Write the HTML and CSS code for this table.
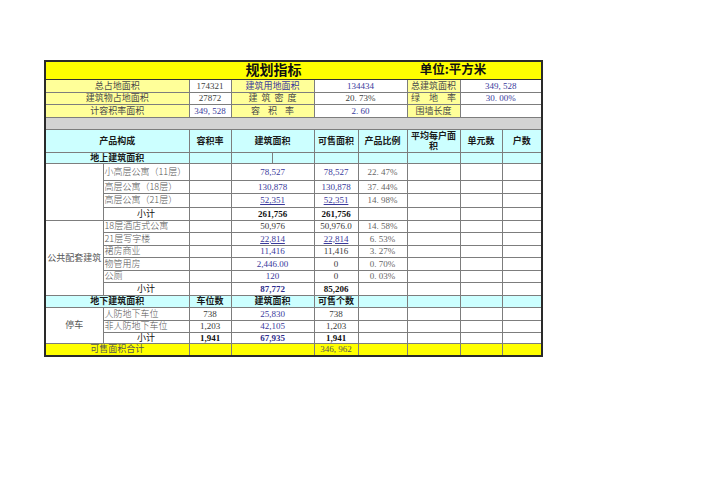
FILE: index.html
```html
<!DOCTYPE html>
<html lang="zh">
<head>
<meta charset="utf-8">
<title>规划指标</title>
<link rel="stylesheet" href="styles.css">
</head>
<body>
<div class="page">
<table class="sheet">
  <colgroup>
    <col class="c1"><col class="c2"><col class="c3"><col class="c4"><col class="c5"><col class="c6"><col class="c7"><col class="c8"><col class="c9">
  </colgroup>
  <tr class="r-title">
    <td colspan="2" class="t-blank"></td>
    <td colspan="3" class="t-main">规划指标</td>
    <td colspan="4" class="t-unit">单位:平方米</td>
  </tr>
  <tr class="r13">
    <td colspan="2" class="lab">总占地面积</td>
    <td class="val">174321</td>
    <td class="lab blue">建筑用地面积</td>
    <td colspan="2" class="val blue">134434</td>
    <td class="lab">总建筑面积</td>
    <td colspan="2" class="val blue">349, 528</td>
  </tr>
  <tr class="r12">
    <td colspan="2" class="lab">建筑物占地面积</td>
    <td class="val">27872</td>
    <td class="lab sp4">建筑密度</td>
    <td colspan="2" class="val">20. 73%</td>
    <td class="lab">绿　地　率</td>
    <td colspan="2" class="val blue">30. 00%</td>
  </tr>
  <tr class="r13">
    <td colspan="2" class="lab">计容积率面积</td>
    <td class="val blue">349, 528</td>
    <td class="lab sp8">容积率</td>
    <td colspan="2" class="val blue">2. 60</td>
    <td class="lab">围墙长度</td>
    <td colspan="2" class="val"></td>
  </tr>
  <tr class="r12">
    <td colspan="9" class="hatch"></td>
  </tr>
  <tr class="r-head">
    <th colspan="2">产品构成</th>
    <th>容积率</th>
    <th>建筑面积</th>
    <th>可售面积</th>
    <th>产品比例</th>
    <th class="wrap">平均每户面积</th>
    <th>单元数</th>
    <th>户数</th>
  </tr>
  <tr class="r11 cyan">
    <th colspan="2">地上建筑面积</th>
    <td></td><td class="split"></td><td></td><td></td><td></td><td></td><td></td>
  </tr>
  <tr class="r17">
    <td rowspan="4" class="grp"></td>
    <td class="name">小高层公寓（11层）</td>
    <td></td>
    <td class="num blue">78,527</td>
    <td class="num blue">78,527</td>
    <td class="pct">22. 47%</td>
    <td></td><td></td><td></td>
  </tr>
  <tr class="r13">
    <td class="name">高层公寓（18层）</td>
    <td></td>
    <td class="num blue">130,878</td>
    <td class="num blue">130,878</td>
    <td class="pct">37. 44%</td>
    <td></td><td></td><td></td>
  </tr>
  <tr class="r14">
    <td class="name">高层公寓（21层）</td>
    <td></td>
    <td class="num blue"><u>52,351</u></td>
    <td class="num blue"><u>52,351</u></td>
    <td class="pct">14. 98%</td>
    <td></td><td></td><td></td>
  </tr>
  <tr class="r13">
    <td class="sub">小计</td>
    <td></td>
    <td class="num b">261,756</td>
    <td class="num b">261,756</td>
    <td></td><td></td><td></td><td></td>
  </tr>
  <tr class="r12">
    <td rowspan="6" class="grp">公共配套建筑</td>
    <td class="name">18层酒店式公寓</td>
    <td></td>
    <td class="num">50,976</td>
    <td class="num">50,976.0</td>
    <td class="pct">14. 58%</td>
    <td></td><td></td><td></td>
  </tr>
  <tr class="r13">
    <td class="name">21层写字楼</td>
    <td></td>
    <td class="num blue"><u>22,814</u></td>
    <td class="num blue"><u>22,814</u></td>
    <td class="pct">6. 53%</td>
    <td></td><td></td><td></td>
  </tr>
  <tr class="r12">
    <td class="name">裙房商业</td>
    <td></td>
    <td class="num blue">11,416</td>
    <td class="num">11,416</td>
    <td class="pct">3. 27%</td>
    <td></td><td></td><td></td>
  </tr>
  <tr class="r13">
    <td class="name">物管用房</td>
    <td></td>
    <td class="num blue">2,446.00</td>
    <td class="num">0</td>
    <td class="pct">0. 70%</td>
    <td></td><td></td><td></td>
  </tr>
  <tr class="r12">
    <td class="name">公厕</td>
    <td></td>
    <td class="num blue">120</td>
    <td class="num">0</td>
    <td class="pct">0. 03%</td>
    <td></td><td></td><td></td>
  </tr>
  <tr class="r13">
    <td class="sub">小计</td>
    <td></td>
    <td class="num b blue">87,772</td>
    <td class="num b">85,206</td>
    <td></td><td></td><td></td><td></td>
  </tr>
  <tr class="r12 cyan">
    <th colspan="2">地下建筑面积</th>
    <th>车位数</th>
    <th>建筑面积</th>
    <th>可售个数</th>
    <td></td><td></td><td></td><td></td>
  </tr>
  <tr class="r13">
    <td rowspan="3" class="grp">停车</td>
    <td class="name">人防地下车位</td>
    <td class="num">738</td>
    <td class="num blue">25,830</td>
    <td class="num">738</td>
    <td></td><td></td><td></td><td></td>
  </tr>
  <tr class="r12">
    <td class="name">非人防地下车位</td>
    <td class="num">1,203</td>
    <td class="num blue">42,105</td>
    <td class="num">1,203</td>
    <td></td><td></td><td></td><td></td>
  </tr>
  <tr class="r11">
    <td class="sub">小计</td>
    <td class="num b">1,941</td>
    <td class="num b blue">67,935</td>
    <td class="num b">1,941</td>
    <td></td><td></td><td></td><td></td>
  </tr>
  <tr class="r13 total">
    <td colspan="2" class="tot-lab">可售面积合计</td>
    <td></td>
    <td></td>
    <td class="num">346, 962</td>
    <td></td><td></td><td></td><td></td>
  </tr>
</table>
</div>
</body>
</html>
```
FILE: styles.css
```css
html, body {
  margin: 0;
  padding: 0;
  background: #ffffff;
}

.page {
  padding: 60px 0 0 44px;
}

.sheet {
  border-collapse: collapse;
  table-layout: fixed;
  width: 498px;
  border: 2px solid #2a2a2a;
  font-family: "Liberation Serif", "Noto Sans CJK SC", serif;
  font-size: 9px;
  color: #444;
}

.c1 { width: 58px; }
.c2 { width: 86px; }
.c3 { width: 42px; }
.c4 { width: 83px; }
.c5 { width: 44px; }
.c6 { width: 49px; }
.c7 { width: 53px; }
.c8 { width: 42px; }
.c9 { width: 40px; }

.sheet td,
.sheet th {
  border: 1px solid #7d7d7d;
  padding: 0 1px;
  line-height: 10px;
  text-align: center;
  vertical-align: middle;
  white-space: nowrap;
  overflow: hidden;
  font-weight: normal;
}

.r-title { height: 18px; }
.r11 { height: 11px; }
.r12 { height: 12px; }
.r13 { height: 13px; }
.r14 { height: 14px; }
.r17 { height: 17px; }
.r-head { height: 23px; }

/* title row */
.sheet .r-title td {
  background: #ffff00;
  border-left: none;
  border-right: none;
  border-bottom: 1px solid #333;
  font-family: "Noto Sans CJK SC", sans-serif;
  font-weight: 700;
  color: #111;
  overflow: visible;
}
.sheet td.t-main {
  font-size: 14px;
  line-height: 14px;
  padding-bottom: 2px;
}
.sheet td.t-unit {
  font-size: 12.5px;
  line-height: 14px;
  padding-left: 8px;
  padding-bottom: 2px;
}

/* info rows */
.lab {
  background: #ffff99;
  font-family: "Noto Sans CJK SC", sans-serif;
  font-weight: 300;
  color: #4a4a4a;
}
.val {
  background: #ffffff;
  color: #3e3e3e;
}
.sheet .blue { color: #3a3a9c; }
.sheet td.sp4 { letter-spacing: 4px; text-indent: 4px; }
.sheet td.sp8 { letter-spacing: 8px; text-indent: 8px; }

.hatch {
  background: repeating-conic-gradient(#a6a6a6 0% 25%, #ffffff 0% 50%) 0 0 / 2px 2px;
}

/* headers */
.r-head th,
.cyan th,
.cyan td {
  background: #ccffff;
  font-family: "Noto Sans CJK SC", sans-serif;
  font-weight: 700;
  color: #1a1a1a;
}
.sheet th.wrap {
  white-space: normal;
  line-height: 10px;
  vertical-align: top;
  padding-top: 1px;
}
.cyan .split {
  background: linear-gradient(#7d7d7d, #7d7d7d) 40px 0 / 1px 100% no-repeat, #ccffff;
}

/* body rows */
.sheet td.name {
  text-align: left;
  padding-left: 1px;
  font-family: "Noto Sans CJK SC", sans-serif;
  font-weight: 300;
  color: #555;
}
.grp {
  font-family: "Noto Sans CJK SC", sans-serif;
  font-weight: 300;
  color: #555;
}
.sub {
  font-family: "Noto Sans CJK SC", sans-serif;
  font-weight: 700;
  color: #111;
}
.num { color: #3a3a3a; }
.sheet .num.b { font-weight: 700; color: #111; }
.sheet .num.b.blue { color: #2e2e8c; }
.pct { color: #666; }
.num u { text-underline-offset: 1px; }

.total td {
  background: #ffff00;
  color: #555;
}
.tot-lab {
  font-family: "Noto Sans CJK SC", sans-serif;
  font-weight: 300;
  color: #555;
}
```
